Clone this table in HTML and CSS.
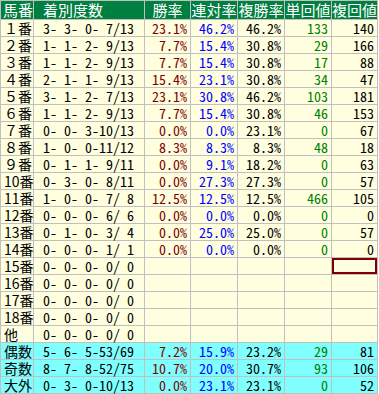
FILE: index.html
```html
<!DOCTYPE html>
<html lang="ja">
<head>
<meta charset="utf-8">
<link rel="stylesheet" href="styles.css">
</head>
<body>
<table class="stats">
<colgroup><col class="w-no"><col class="w-rec"><col class="w-a"><col class="w-b"><col class="w-b"><col class="w-b"><col class="w-a"></colgroup>
<thead>
<tr><th class="h-no">馬番</th><th class="h-rec">着別度数</th><th>勝率</th><th>連対率</th><th>複勝率</th><th>単回値</th><th>複回値</th></tr>
</thead>
<tbody>
<tr><td class="no">１番</td><td class="rec">3- 3- 0- 7/13</td><td class="win">23.1%</td><td class="ren">46.2%</td><td class="fuku">46.2%</td><td class="tan">133</td><td class="fret">140</td></tr>
<tr><td class="no">２番</td><td class="rec">1- 1- 2- 9/13</td><td class="win">7.7%</td><td class="ren">15.4%</td><td class="fuku">30.8%</td><td class="tan">29</td><td class="fret">166</td></tr>
<tr><td class="no">３番</td><td class="rec">1- 1- 2- 9/13</td><td class="win">7.7%</td><td class="ren">15.4%</td><td class="fuku">30.8%</td><td class="tan">17</td><td class="fret">88</td></tr>
<tr><td class="no">４番</td><td class="rec">2- 1- 1- 9/13</td><td class="win">15.4%</td><td class="ren">23.1%</td><td class="fuku">30.8%</td><td class="tan">34</td><td class="fret">47</td></tr>
<tr><td class="no">５番</td><td class="rec">3- 1- 2- 7/13</td><td class="win">23.1%</td><td class="ren">30.8%</td><td class="fuku">46.2%</td><td class="tan">103</td><td class="fret">181</td></tr>
<tr><td class="no">６番</td><td class="rec">1- 1- 2- 9/13</td><td class="win">7.7%</td><td class="ren">15.4%</td><td class="fuku">30.8%</td><td class="tan">46</td><td class="fret">153</td></tr>
<tr><td class="no">７番</td><td class="rec">0- 0- 3-10/13</td><td class="win">0.0%</td><td class="ren">0.0%</td><td class="fuku">23.1%</td><td class="tan">0</td><td class="fret">67</td></tr>
<tr><td class="no">８番</td><td class="rec">1- 0- 0-11/12</td><td class="win">8.3%</td><td class="ren">8.3%</td><td class="fuku">8.3%</td><td class="tan">48</td><td class="fret">18</td></tr>
<tr><td class="no">９番</td><td class="rec">0- 1- 1- 9/11</td><td class="win">0.0%</td><td class="ren">9.1%</td><td class="fuku">18.2%</td><td class="tan">0</td><td class="fret">63</td></tr>
<tr><td class="no">10番</td><td class="rec">0- 3- 0- 8/11</td><td class="win">0.0%</td><td class="ren">27.3%</td><td class="fuku">27.3%</td><td class="tan">0</td><td class="fret">57</td></tr>
<tr><td class="no">11番</td><td class="rec">1- 0- 0- 7/ 8</td><td class="win">12.5%</td><td class="ren">12.5%</td><td class="fuku">12.5%</td><td class="tan">466</td><td class="fret">105</td></tr>
<tr><td class="no">12番</td><td class="rec">0- 0- 0- 6/ 6</td><td class="win">0.0%</td><td class="ren">0.0%</td><td class="fuku">0.0%</td><td class="tan">0</td><td class="fret">0</td></tr>
<tr><td class="no">13番</td><td class="rec">0- 1- 0- 3/ 4</td><td class="win">0.0%</td><td class="ren">25.0%</td><td class="fuku">25.0%</td><td class="tan">0</td><td class="fret">57</td></tr>
<tr><td class="no">14番</td><td class="rec">0- 0- 0- 1/ 1</td><td class="win">0.0%</td><td class="ren">0.0%</td><td class="fuku">0.0%</td><td class="tan">0</td><td class="fret">0</td></tr>
<tr><td class="no">15番</td><td class="rec">0- 0- 0- 0/ 0</td><td></td><td></td><td></td><td></td><td class="sel"></td></tr>
<tr><td class="no">16番</td><td class="rec">0- 0- 0- 0/ 0</td><td></td><td></td><td></td><td></td><td></td></tr>
<tr><td class="no">17番</td><td class="rec">0- 0- 0- 0/ 0</td><td></td><td></td><td></td><td></td><td></td></tr>
<tr><td class="no">18番</td><td class="rec">0- 0- 0- 0/ 0</td><td></td><td></td><td></td><td></td><td></td></tr>
<tr><td class="no">他</td><td class="rec">0- 0- 0- 0/ 0</td><td></td><td></td><td></td><td></td><td></td></tr>
<tr class="sum"><td class="no">偶数</td><td class="rec">5- 6- 5-53/69</td><td class="win">7.2%</td><td class="ren">15.9%</td><td class="fuku">23.2%</td><td class="tan">29</td><td class="fret">81</td></tr>
<tr class="sum"><td class="no">奇数</td><td class="rec">8- 7- 8-52/75</td><td class="win">10.7%</td><td class="ren">20.0%</td><td class="fuku">30.7%</td><td class="tan">93</td><td class="fret">106</td></tr>
<tr class="sum"><td class="no">大外</td><td class="rec">0- 3- 0-10/13</td><td class="win">0.0%</td><td class="ren">23.1%</td><td class="fuku">23.1%</td><td class="tan">0</td><td class="fret">52</td></tr>
</tbody>
</table>
</body>
</html>
```
FILE: styles.css
```css
html, body {
  margin: 0;
  padding: 0;
  background: #ffffff;
}
.stats {
  border-collapse: collapse;
  table-layout: fixed;
  width: 378px;
  font-family: "Noto Sans CJK JP", sans-serif;
  font-size: 14px;
  font-feature-settings: "hwid";
  line-height: 16px;
}
.w-no { width: 33px; }
.w-rec { width: 111px; }
.w-a { width: 46px; }
.w-b { width: 47px; }
.stats th, .stats td {
  box-sizing: border-box;
  border: 1px solid #c0c0c0;
  padding: 0 3px 0 0;
  height: 17px;
  white-space: pre;
}
.stats th {
  background: #008040;
  color: #ffffff;
  font-weight: normal;
  font-size: 15px;
  line-height: 18px;
  height: 19px;
  padding: 0;
  text-align: center;
}
.stats td {
  background: #ffffe0;
  text-align: right;
}
.stats th.h-no { text-align: left; padding-left: 2px; }
.stats th.h-rec { text-align: left; padding-left: 9px; }
.stats td.no {
  text-align: left;
  padding-left: 3px;
  padding-right: 0;
  font-feature-settings: normal;
}
.stats td.rec { text-align: left; padding-left: 9px; }
.win { color: #800000; }
.ren { color: #0000ff; }
.fuku { color: #000000; }
.tan { color: #008000; }
.fret { color: #000000; }
.stats tr.sum td { background: #80ffff; }
.stats td.sel { box-shadow: inset 0 0 0 2px #800000; }
```
